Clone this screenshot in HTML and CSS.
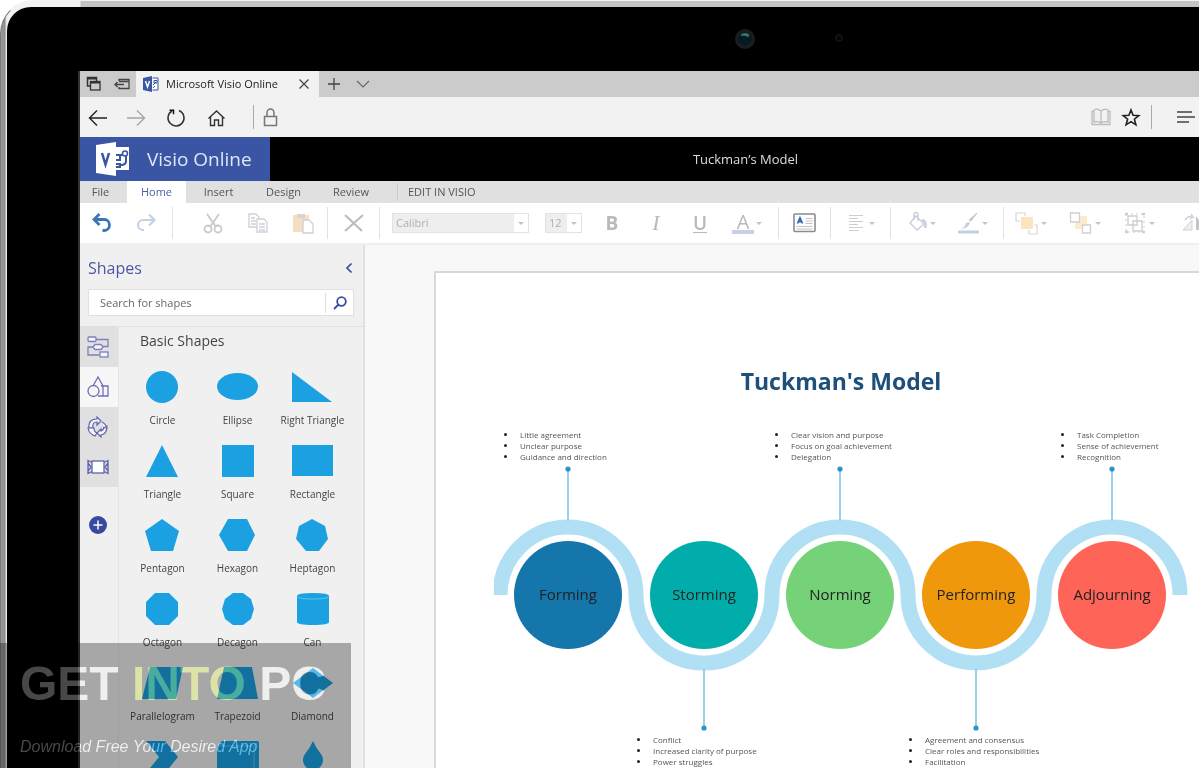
FILE: index.html
```html
<!DOCTYPE html>
<html lang="en">
<head>
<meta charset="utf-8">
<title>Microsoft Visio Online</title>
<link rel="stylesheet" href="styles.css">
</head>
<body>
<div class="device">
<div class="bezel">
<svg class="camera" width="120" height="26" viewBox="0 0 120 26" aria-hidden="true">
  <circle cx="12" cy="13" r="10" fill="#1b1d20"/><circle cx="12" cy="13" r="7" fill="#071a20"/>
  <path d="M7.500 9a6 6 0 0 1 9 0q-1 2-2 2-2-2-6-1z" fill="#35776f"/>
  <circle cx="106" cy="12" r="3" fill="#050505" stroke="#151515" stroke-width="1.500"/>
</svg>
<div class="screen">

<div class="tabstrip">
  <button class="strip-btn" aria-label="Tabs set aside"><svg width="16" height="16" viewBox="0 0 16 16" fill="none" stroke="#333"><path d="M4 10H1.500V1.500h9V5" stroke-width="1.500"/><path d="M2 2.500h8" stroke-width="2"/><rect x="4.500" y="5.500" width="9.500" height="8.500" stroke-width="1.300"/><path d="M4.500 6.500h9.500" stroke-width="2"/></svg></button>
  <button class="strip-btn" aria-label="Set tabs aside"><svg width="16" height="16" viewBox="0 0 16 16" fill="none" stroke="#444" stroke-width="1.300"><path d="M5 5V3.500h10v9H5V11M5 5.500h10M1 8.500h9M3.500 6L1 8.500 3.500 11"/></svg></button>
  <div class="tab">
    <svg width="16" height="16" viewBox="0 0 16 16"><path d="M0 2l9-2v16l-9-2z" fill="#3955a3"/><path d="M9.500 2H15v12H9.500" fill="#fff" stroke="#3955a3"/><path d="M2.500 5L4.500 11 6.500 5" fill="none" stroke="#fff" stroke-width="1.500"/><path d="M10 9l3-3M11 4.500h3v2.500h-3zM10 12l2-2" fill="none" stroke="#3955a3"/></svg>
    <span class="tab-name">Microsoft Visio Online</span>
    <button class="tab-close" aria-label="Close tab"><svg width="12" height="12" viewBox="0 0 12 12" stroke="#444" stroke-width="1.200"><path d="M1.500 1.500l9 9M10.500 1.500l-9 9"/></svg></button>
  </div>
  <button class="strip-btn" aria-label="New tab"><svg width="14" height="14" viewBox="0 0 14 14" stroke="#444" stroke-width="1.300"><path d="M7 1v12M1 7h12"/></svg></button>
  <button class="strip-btn" aria-label="Tab previews"><svg width="14" height="14" viewBox="0 0 14 14" fill="none" stroke="#666" stroke-width="1.200"><path d="M1 4l6 6 6-6"/></svg></button>
</div>

<div class="address">
  <button class="nav-btn nav-back" aria-label="Back"><svg width="20" height="20" viewBox="0 0 20 20" fill="none" stroke="#222" stroke-width="1.400"><path d="M1.500 11H19M9 3.500L1.500 11 9 18.500"/></svg></button>
  <button class="nav-btn" aria-label="Forward"><svg width="20" height="20" viewBox="0 0 20 20" fill="none" stroke="#a5a5a5" stroke-width="1.400"><path d="M1 11h17.500M11 3.500l7.500 7.500-7.500 7.500"/></svg></button>
  <button class="nav-btn" aria-label="Refresh"><svg width="20" height="20" viewBox="0 0 20 20" fill="none" stroke="#333" stroke-width="1.500"><path d="M6 4A8 8 0 1 0 13 3.500"/><path d="M3.500 3.200H7.500v4" stroke="#111"/></svg></button>
  <button class="nav-btn" aria-label="Home"><svg width="20" height="20" viewBox="0 0 20 20" fill="none" stroke="#333" stroke-width="1.400"><path d="M2.500 11.500L10.500 4l8 7.500M4.500 10V18.500h4v-5.500h4v5.500h4V10"/></svg></button>
  <span class="bar-line"></span>
  <svg width="16" height="20" viewBox="0 0 16 20" fill="none" stroke="#777" stroke-width="1.500"><rect x="1.500" y="9.500" width="12" height="9"/><path d="M4 9.500V5.500a3.500 3.500 0 0 1 7 0V9.500"/></svg>
  <span class="fill"></span>
  <button class="side-btn" aria-label="Reading view"><svg width="20" height="18" viewBox="0 0 20 18" fill="none" stroke="#bbb" stroke-width="1.300"><path d="M10 3Q6 0 3 2v12q4-1 7 1 3-2 7-1V2q-3-2-7 1zM10 3v12M3 3.500H1v13h18v-13h-2"/></svg></button>
  <button class="side-btn" aria-label="Add to favourites"><svg width="20" height="20" viewBox="0 0 20 20" fill="none" stroke="#222" stroke-width="1.600"><path d="M10 3l2.100 5.300 5.700.3-4.400 3.600 1.500 5.600-4.900-3.200-4.900 3.200 1.500-5.600L2.200 8.600l5.700-.3z"/></svg></button>
  <span class="bar-line"></span>
  <button class="hub-btn" aria-label="Hub"><svg width="20" height="14" viewBox="0 0 20 14" stroke="#444" stroke-width="1.600"><path d="M1 2h15M1 7h18M1 12h12"/></svg></button>
</div>

<header class="appbar">
  <div class="brand">
    <svg width="34" height="34" viewBox="0 0 34 34"><path d="M19 5h14v23H19z" fill="#fff"/><path d="M0 3L20 0v34L0 31z" fill="#fff"/><path d="M6 11l3.500 11.500L13 11" fill="none" stroke="#3955a3" stroke-width="2.500"/><path d="M20 13h4v5h-4M24 14l3-2M20 22h4v3h-4M30 14v5q0 4-5 4" fill="none" stroke="#3955a3" stroke-width="2"/><circle cx="29" cy="11.500" r="2.500" fill="#fff" stroke="#3955a3" stroke-width="1.500"/></svg>
    <span class="brand-name">Visio Online</span>
  </div>
  <div class="doc-name">Tuckman’s Model</div>
</header>

<nav class="ribbon">
  <button class="rt rt-file">File</button>
  <button class="rt rt-home">Home</button>
  <button class="rt rt-insert">Insert</button>
  <button class="rt rt-insert">Design</button>
  <button class="rt rt-review">Review</button>
  <button class="rt rt-edit">EDIT IN VISIO</button>
</nav>

<div class="toolbar">
  <div class="tg tg-a">
    <button class="tool" aria-label="Undo"><svg width="22" height="20" viewBox="0 0 22 20" fill="none" stroke="#3a78b5" stroke-width="2.800"><path d="M3 6.500h10.500a5 5.500 0 0 1 0 11h-2M8.500 1L3 6.500 8.500 12"/></svg></button>
    <button class="tool" aria-label="Redo"><svg width="22" height="20" viewBox="0 0 22 20" fill="none" stroke="#c3d3e4" stroke-width="2.200"><path d="M19 7H8a5 5 0 0 0 0 10h1M14 1.500L19.500 7 14 12.500"/></svg></button>
  </div>
  <div class="tg tg-b">
    <button class="tool" aria-label="Cut"><svg width="20" height="22" viewBox="0 0 20 22" fill="none" stroke="#c9c9cc" stroke-width="1.800"><path d="M4 2l9 13M16 2L7 15"/><circle cx="5" cy="17" r="3.500"/><circle cx="15" cy="17" r="3.500"/></svg></button>
    <button class="tool" aria-label="Copy"><svg width="20" height="22" viewBox="0 0 20 22" fill="#fff" stroke="#ccd0d8" stroke-width="1.300"><path d="M1 2h7l3 3v10H1z"/><path d="M9 7h7l3 3v10H9z"/><path d="M3 6h4M3 9h5M3 12h5M11 12h6M11 15h6M11 18h6"/></svg></button>
    <button class="tool" aria-label="Paste"><svg width="22" height="22" viewBox="0 0 22 22"><path d="M1 3h16v17H1z" fill="#f6dfc0"/><path d="M5 2h8v4H5z" fill="#d5d5d8"/><path d="M11 8h6l4 4v9H11z" fill="#fff" stroke="#ccd0d8" stroke-width="1.300"/></svg></button>
  </div>
  <div class="tg">
    <button class="tool tool-solo" aria-label="Delete"><svg width="22" height="20" viewBox="0 0 22 20" stroke="#bdbdbd" stroke-width="2.200"><path d="M2 2l17 16M20 2L2 18"/></svg></button>
  </div>
  <div class="tg tg-d">
    <span class="pick pick-font"><select aria-label="Font"><option>Calibri</option></select><i class="pick-caret"></i></span>
    <span class="pick pick-size"><select aria-label="Font size"><option>12</option></select><i class="pick-caret"></i></span>
    <button class="tool letter bold" aria-label="Bold">B</button>
    <button class="tool letter italic" aria-label="Italic">I</button>
    <button class="tool letter under" aria-label="Underline">U</button>
    <button class="tool tool-menu" aria-label="Font colour"><span class="ink">A</span><i class="caret"></i></button>
  </div>
  <div class="tg">
    <button class="tool tool-solo" aria-label="Text box"><svg width="24" height="20" viewBox="0 0 24 20" fill="none"><rect x="1" y="1" width="21" height="17.500" rx="1" fill="#fff" stroke="#8b8b90" stroke-width="1.600"/><path d="M4.500 10.500L7 5 9.500 10.500M5.500 8.500h3" stroke="#2b6cb0" stroke-width="1.800"/><path d="M12.500 5.500h7M12.500 8h7M12.500 10.500h7M3.500 13.500h16M3.500 16h16" stroke="#c2c2c6"/></svg></button>
  </div>
  <div class="tg">
    <button class="tool tool-align" aria-label="Align"><svg width="18" height="18" viewBox="0 0 18 18" stroke="#cdcdd2" stroke-width="1.200"><path d="M2 1.500h14M2 4.500h9M2 7.500h14M2 10.500h9M2 13.500h14M2 16.500h10"/></svg><i class="caret"></i></button>
  </div>
  <div class="tg tg-g">
    <button class="tool tool-menu" aria-label="Fill"><svg width="20" height="22" viewBox="0 0 20 22" fill="none" stroke="#c6ccd6" stroke-width="1.300"><path d="M8 4l8 8-7 6-7-7zM6 8V2.500a2 2 0 0 1 4 0V9"/><path d="M14 8q5 1 3 8" stroke="#c3cee0" stroke-width="2.500"/></svg><i class="caret"></i></button>
    <button class="tool tool-menu" aria-label="Line"><svg width="23" height="24" viewBox="0 0 23 24"><path d="M20 2l-6 8-2-1z" fill="#c5c7cc" stroke="#c5c7cc"/><path d="M13 11q-1 6-9 7 4-2 5-6z" fill="#c2cfe2"/><path d="M1 19.500h21v3H1z" fill="#c2d0e4"/></svg><i class="caret"></i></button>
  </div>
  <div class="tg tg-h">
    <button class="tool tool-menu" aria-label="Bring forward"><svg width="24" height="24" viewBox="0 0 24 24" fill="none" stroke="#d5d5da" stroke-width="1.200"><path d="M5 10H1V2h9v3M14 19v4h8v-9h-3"/><path d="M6 6h12v12H6z" fill="#fbe5bf" stroke="none"/></svg><i class="caret"></i></button>
    <button class="tool tool-menu" aria-label="Send backward"><svg width="24" height="24" viewBox="0 0 24 24" stroke="#cfcfd4" stroke-width="1.300"><path d="M6 5h12v13H6z" fill="#fbedcb" stroke="none"/><path d="M1.500 2h9v9h-9zM13.500 14h8v8h-8z" fill="#fff"/></svg><i class="caret"></i></button>
    <button class="tool tool-menu" aria-label="Group"><svg width="24" height="24" viewBox="0 0 24 24" fill="none" stroke="#cdcdd3" stroke-width="1.300"><path d="M5 5h9v9H5zM10 10h9v10h-9z"/><path d="M3 3h18v18H3z" stroke-dasharray="2 3" stroke-width="1"/><path d="M2 3h3M19 3h3M2 21h3M19 21h3" stroke-width="2.500"/></svg><i class="caret"></i></button>
    <button class="tool tool-menu" aria-label="Rotate"><svg width="28" height="20" viewBox="0 0 28 20"><path d="M4 17L13 7v10z" fill="#eee" stroke="#d0d0d6"/><path d="M17 3v14h10z" fill="#c4c4ca"/><path d="M6 7q3-5 8-3l-2-3M14 4l-3 2" fill="none" stroke="#ccd3de" stroke-width="1.500"/></svg></button>
  </div>
</div>

<main class="workspace">
<aside class="panel">
  <div class="panel-head">
    <div class="panel-title"><h2>Shapes</h2><button class="collapse" aria-label="Collapse"><svg width="8" height="12" viewBox="0 0 8 12" fill="none" stroke="#3b4a9c" stroke-width="1.700"><path d="M6.500 1.500L2 6l4.500 4.500"/></svg></button></div>
    <div class="search"><input type="text" placeholder="Search for shapes" aria-label="Search for shapes"><button aria-label="Search"><svg width="14" height="14" viewBox="0 0 14 14" fill="none" stroke="#3b4a9c" stroke-width="1.800"><circle cx="8.500" cy="5.500" r="4.300"/><path d="M5.500 8.500L1 13"/></svg></button></div>
  </div>
  <div class="panel-body">
    <div class="rail">
      <button class="rail-btn" aria-label="Flowchart"><svg width="22" height="22" viewBox="0 0 22 22" fill="#f4f4fa" stroke="#7d80bb" stroke-width="1.300"><path d="M9 3.500h12v7h-5M6 11H1v8h11" fill="none"/><rect x="1" y="1" width="8" height="4.500" rx="1"/><path d="M6 11l2-2.500h6l2 2.500-2 2.500H8z"/><rect x="13" y="16" width="8" height="5"/></svg></button>
      <button class="rail-btn active" aria-label="Basic shapes"><svg width="22" height="22" viewBox="0 0 22 22" fill="none" stroke="#6d70b3" stroke-width="1.300"><path d="M6 10L11 1l5 9v10h-5M14 10h7v10h-7"/><circle cx="6.500" cy="15" r="5.500" fill="#f6f6f8"/></svg></button>
      <button class="rail-btn" aria-label="Cycle"><svg width="22" height="22" viewBox="0 0 22 22" fill="#f4f4fa" stroke="#5f63ac" stroke-width="1.200"><path d="M2 12Q1 3 10 3V1l4 4-4 4V6Q5 6 6 12z"/><path d="M1 12h6q0 4 3 5l-2 3Q2 18 1 12zM10 17l4-4v2q3-1 3-4l3-1q0 8-6 9v2z"/><path d="M15 6q4 2 4.500 6l-3-1"/></svg></button>
      <button class="rail-btn" aria-label="Network"><svg width="22" height="16" viewBox="0 0 22 16" fill="none" stroke="#5f63ac" stroke-width="1.300"><rect x="5" y="2" width="12" height="12" fill="#fff"/><path d="M5 3.500L1 1.500v13l4-2M1 4l3 4-3 4M17 3.500l4-2v13l-4-2M21 4l-3 4 3 4"/></svg></button>
      <button class="rail-add" aria-label="Add shapes"><svg width="18" height="18" viewBox="0 0 18 18"><circle cx="9" cy="9" r="9" fill="#3949a0"/><path d="M9 4.500v9M4.500 9h9" stroke="#fff" stroke-width="1.500"/></svg></button>
    </div>
    <section class="catalog">
      <h3>Basic Shapes</h3>
      <div class="shapes">
        <div class="shape"><svg viewBox="0 0 42 32"><circle cx="20" cy="16" r="16"/></svg><span>Circle</span></div>
        <div class="shape"><svg viewBox="0 0 42 32"><ellipse cx="20.500" cy="15.500" rx="20.500" ry="13.500"/></svg><span>Ellipse</span></div>
        <div class="shape"><svg viewBox="0 0 42 32"><path d="M0 1v30h40z"/></svg><span>Right Triangle</span></div>
        <div class="shape"><svg viewBox="0 0 42 32"><path d="M20 0l16 32H4z"/></svg><span>Triangle</span></div>
        <div class="shape"><svg viewBox="0 0 42 32"><path d="M5 0h32v32H5z"/></svg><span>Square</span></div>
        <div class="shape"><svg viewBox="0 0 42 32"><path d="M0 0h41v31H0z"/></svg><span>Rectangle</span></div>
        <div class="shape"><svg viewBox="0 0 42 32"><path d="M20 0l17 12-6 20H9L3 12z"/></svg><span>Pentagon</span></div>
        <div class="shape"><svg viewBox="0 0 42 32"><path d="M11 0h19l8 16-8 16H11L2 16z"/></svg><span>Hexagon</span></div>
        <div class="shape"><svg viewBox="0 0 42 32"><path d="M20 0l13 7 3 13-9 12H14L4 20 7 7z"/></svg><span>Heptagon</span></div>
        <div class="shape"><svg viewBox="0 0 42 32"><path d="M13 0h14l9 9v14l-9 9H13l-9-9V9z"/></svg><span>Octagon</span></div>
        <div class="shape"><svg viewBox="0 0 42 32"><path d="M16 0h10l8 6 3 10-3 10-8 6H16l-8-6-3-10L8 6z"/></svg><span>Decagon</span></div>
        <div class="shape"><svg viewBox="0 0 42 32"><path d="M5 3q0-3 16-3t16 3v26q0 3-16 3T5 29z"/><path class="rim" d="M5 3q0 3 16 3t16-3"/></svg><span>Can</span></div>
        <div class="shape"><svg viewBox="0 0 42 32"><path d="M8 0h33l-7 32H0z"/></svg><span>Parallelogram</span></div>
        <div class="shape"><svg viewBox="0 0 42 32"><path d="M7 0h28l6 32H0z"/></svg><span>Trapezoid</span></div>
        <div class="shape"><svg viewBox="0 0 42 32"><path d="M21 1l20 15-20 15L1 16z"/></svg><span>Diamond</span></div>
        <div class="shape"><svg viewBox="0 0 42 32" role="img" aria-label="Chevron"><path d="M4 0h19l13 16-13 16H4l13-16z"/></svg></div>
        <div class="shape"><svg viewBox="0 0 42 32" role="img" aria-label="Cube"><path d="M0 5l5-5h37v27l-5 5H0z"/><path class="rim" d="M0 5h37v27M37 5l5-5"/></svg></div>
        <div class="shape"><svg viewBox="0 0 42 32" role="img" aria-label="Teardrop"><path d="M21 0q3 7 8 13a10 10 0 1 1-16 0q5-6 8-13z"/></svg></div>
      </div>
    </section>
  </div>
</aside>

<div class="canvas">
  <article class="sheet">
    <div class="figure">
      <h1>Tuckman's Model</h1>
      <div class="diagram">
        <svg class="wave" width="694" height="375" viewBox="0 0 694 375" fill="none">
          <path d="M6 196a68 68 0 0 1 136 0a68 68 0 0 0 136 0a68 68 0 0 1 136 0a68 68 0 0 0 136 0a68 68 0 0 1 136 0" stroke="#b1dff4" stroke-width="15"/>
          <path d="M74 72v50M346 72v50M618 72v50M210 270v59M482 270v59" stroke="#9bd0ec" stroke-width="2"/>
          <g fill="#2c93c9"><circle cx="74" cy="70" r="2.600"/><circle cx="346" cy="70" r="2.600"/><circle cx="618" cy="70" r="2.600"/><circle cx="210" cy="329" r="2.600"/><circle cx="482" cy="329" r="2.600"/></g>
        </svg>
        <div class="stage forming">Forming</div>
        <div class="stage storming">Storming</div>
        <div class="stage norming">Norming</div>
        <div class="stage performing">Performing</div>
        <div class="stage adjourning">Adjourning</div>
        <ul class="note n1"><li>Little agreement</li><li>Unclear purpose</li><li>Guidance and direction</li></ul>
        <ul class="note n2"><li>Conflict</li><li>Increased clarity of purpose</li><li>Power struggles</li></ul>
        <ul class="note n3"><li>Clear vision and purpose</li><li>Focus on goal achievement</li><li>Delegation</li></ul>
        <ul class="note n4"><li>Agreement and consensus</li><li>Clear roles and responsibilities</li><li>Facilitation</li></ul>
        <ul class="note n5"><li>Task Completion</li><li>Sense of achievement</li><li>Recognition</li></ul>
      </div>
    </div>
  </article>
</div>
</main>
</div>
</div>
</div>

<div class="watermark">
  <p class="wm-name">GET <span class="wm-into">INTO</span> PC</p>
  <p class="wm-line">Download Free Your Desired App</p>
</div>
</body>
</html>
```
FILE: styles.css
```css
* { box-sizing: border-box; }
body { margin: 0; position: relative; background: #fff; font-family: "Open Sans", "Noto Sans", sans-serif; font-size: 11px; color: #444; }
h1, h2, h3, p, ul { margin: 0; padding: 0; font-weight: normal; }
button { border: 0; padding: 0; margin: 0; background: none; font: inherit; color: inherit; display: flex; align-items: center; justify-content: center; }
svg { display: block; flex: none; }

.device { height: 100vh; padding: 6px 0 0 6px; overflow: hidden; border-top: 1px solid #f2f2f2; border-left: 1px solid #777; border-radius: 34px 0 0 0; background: linear-gradient(90deg, #999 0, #8d8d8d 4px, #ddd 5px, #f2f2f2 6px, #f2f2f2 79px, #c2c5c1 80px); }
.bezel { height: 100%; padding: 64px 0 0 71px; background: #000; border-radius: 24px 0 0 0; position: relative; }
.camera { position: absolute; top: 19px; left: 726px; }
.screen { height: 100%; display: flex; flex-direction: column; border-left: 2px solid #333; background: #f8f8f8; }

.tabstrip { display: flex; align-items: stretch; height: 26px; flex: none; background: #cbcbcb; }
.strip-btn { width: 28px; }
.tab + .strip-btn { width: 30px; }
.tab { display: flex; align-items: center; width: 183px; padding: 0 9px 0 7px; background: #f2f2f2; color: #222; }
.tab svg { margin-right: 7px; }
.tab-name { flex: 1; padding-bottom: 2px; white-space: nowrap; }
.tab-close svg { margin: 0; }

.address { display: flex; align-items: center; height: 40px; flex: none; padding: 0 3px 0 0; background: #f2f2f2; }
.nav-btn { width: 40px; }
.nav-back { width: 36px; }
.bar-line { width: 1px; height: 24px; background: #aaa; }
.address .nav-btn + .bar-line { margin: 0 9px 0 17px; }
.fill { flex: 1; }
.side-btn { width: 30px; }
.side-btn + .bar-line { margin-left: 5px; }
.hub-btn { margin-left: 24px; }

.appbar { display: flex; align-items: center; height: 44px; flex: none; background: #000; }
.brand { display: flex; align-items: center; gap: 17px; width: 190px; height: 100%; padding-left: 16px; background: #3955a3; color: #dfe6f7; font-size: 19px; }
.brand-name { white-space: nowrap; }
.doc-name { flex: 1; padding-left: 22px; text-align: center; font-size: 13px; color: #ddd; }

.ribbon { display: flex; height: 22px; flex: none; background: #e0e0e0; font-size: 11px; color: #555; }
.rt { padding-bottom: 2px; }
.rt-file { width: 41px; margin-right: 6px; }
.rt-home { width: 59px; background: #fff; color: #4a62ab; }
.rt-insert { width: 65px; }
.rt-review { width: 70px; }
.rt-edit { align-self: center; height: 18px; margin-left: 11px; padding-left: 10px; border-left: 1px solid #ccc; }

.toolbar { display: flex; align-items: center; height: 42px; flex: none; overflow: hidden; background: #fff; border-bottom: 2px solid #efefef; }
.tg { display: flex; align-items: center; flex: none; height: 32px; border-right: 1px solid #e2e2e4; }
.tg-a { padding: 0 4px 0 0; }
.tg-b { padding: 0 2px 0 17px; }
.tg-d { padding: 0 6px 0 12px; }
.tg-g { padding: 0 6px; }
.tg-h { border: 0; }
.tool { width: 44px; height: 32px; }
.tg-b .tool { width: 45px; }
.tool-solo { width: 51px; }
.tool-align { width: 59px; gap: 4px; }
.tool-menu { width: 50px; gap: 2px; }
.tg-h .tool-menu { width: 54px; }
.pick { position: relative; height: 20px; border: 1px solid #e2e2e2; background: #eee; }
.pick-font { width: 137px; margin-right: 16px; }
.pick-size { width: 37px; margin-right: 8px; }
.pick select { appearance: none; display: block; width: 100%; height: 18px; padding: 0 16px 0 3px; border: 0; background: none; font-family: inherit; font-size: 11px; line-height: 18px; color: #b0b0b0; }
.pick-caret { position: absolute; top: 0; right: 0; bottom: 0; width: 14px; background: #fff; }
.pick-caret::after { content: ""; display: block; margin: 8px auto 0; width: 0; border: 3px solid transparent; border-top-color: #c4c4c4; border-bottom: 0; }
.caret { border: 3px solid transparent; border-top-color: #c4c4ca; border-bottom: 0; }
.letter { font-size: 18px; color: #b9b9b9; }
.bold { font-size: 19px; font-weight: 700; }
.italic { font-family: "Liberation Serif", serif; font-style: italic; font-size: 22px; }
.under { text-decoration: underline; text-underline-offset: 2px; text-decoration-thickness: 1px; font-size: 19px; font-weight: 600; }
.ink { width: 22px; border-bottom: 4px solid #c6d0e6; font-size: 20px; line-height: 17px; color: #b9b9b9; }

.workspace { display: flex; flex: 1; min-height: 0; overflow: hidden; }
.panel { width: 285px; flex: none; background: #f0f0f1; border-right: 2px solid #e0e0e2; }
.panel-head { padding: 12px 9px 10px 8px; border-bottom: 1px solid #e0e0e2; }
.panel-title { display: flex; align-items: center; justify-content: space-between; height: 22px; margin-bottom: 10px; padding-right: 1px; }
.panel-title h2 { font-size: 16px; color: #4b57a3; }
.collapse { width: 8px; }
.search { display: flex; align-items: center; height: 27px; background: #fff; border: 1px solid #e0e0e2; }
.search input { flex: 1; min-width: 0; padding: 0 0 0 11px; border: 0; background: none; font-family: inherit; font-size: 11px; color: #666; }
.search input::placeholder { color: #666; opacity: 1; }
.search button { width: 28px; height: 20px; border-left: 1px solid #ddd; }
.panel-body { display: flex; }
.rail { width: 39px; flex: none; border-right: 1px solid #e6e6e8; }
.rail-btn { width: 38px; height: 40px; padding-right: 2px; background: #e0e0e1; }
.rail-btn.active { background: #f7f7f8; }
.rail-add { width: 36px; height: 18px; margin-top: 29px; }
.catalog { flex: 1; padding-top: 4px; }
.catalog h3 { padding-left: 21px; font-size: 14px; line-height: 20px; color: #444; }
.shapes { display: grid; grid-template-columns: repeat(3, 75px); row-gap: 17px; margin: 20px 0 0 6px; }
.shape { display: flex; flex-direction: column; align-items: center; gap: 9px; font-size: 10px; line-height: 16px; white-space: nowrap; color: #444; }
.shape svg { width: 42px; height: 32px; fill: #1ba1e2; }
.shape .rim { fill: none; stroke: #5fc0ee; }

.canvas { flex: 1; min-width: 0; padding: 26px 0 0 69px; background: #f8f8f8; overflow: hidden; }
.sheet { height: 100%; padding: 90px 0 0 58px; background: #fff; border: solid #d8d8d8; border-width: 2px 0 0 2px; overflow: hidden; }
.figure { width: 694px; }
.figure h1 { text-align: center; font-weight: 700; font-size: 23px; line-height: 36px; color: #1d4f7a; }
.diagram { position: relative; height: 375px; }
.wave { position: absolute; top: 0; left: 0; }
.stage { position: absolute; top: 142px; width: 108px; height: 108px; border-radius: 50%; text-align: center; font-size: 15px; line-height: 106px; color: #222; }
.forming { left: 20px; background: #1476aa; }
.storming { left: 156px; background: #00adaa; }
.norming { left: 292px; background: #76d278; }
.performing { left: 428px; background: #f0980c; }
.adjourning { left: 564px; background: #ff6459; }
.note { position: absolute; top: 30px; list-style: none; font-size: 8px; line-height: 11px; white-space: nowrap; color: #555; }
.note li { display: flex; align-items: center; gap: 13px; }
.note li::before { content: ""; width: 3px; height: 3px; border-radius: 50%; background: #222; }
.n1 { left: 10px; }
.n2 { left: 143px; top: 335px; }
.n3 { left: 281px; }
.n4 { left: 415px; top: 335px; }
.n5 { left: 567px; }

.watermark { position: absolute; left: 0; bottom: 0; width: 351px; height: 125px; padding: 14px 0 0 20px; background: rgba(0, 0, 0, 0.3); font-family: "Liberation Sans", Arial, sans-serif; white-space: nowrap; }
.wm-name { font-weight: 700; font-size: 48px; line-height: 54px; color: #484848; mix-blend-mode: plus-lighter; }
.wm-into { color: #363c00; }
.wm-line { margin-top: 26px; font-style: italic; font-size: 16px; line-height: 20px; color: #484848; mix-blend-mode: plus-lighter; }
```
